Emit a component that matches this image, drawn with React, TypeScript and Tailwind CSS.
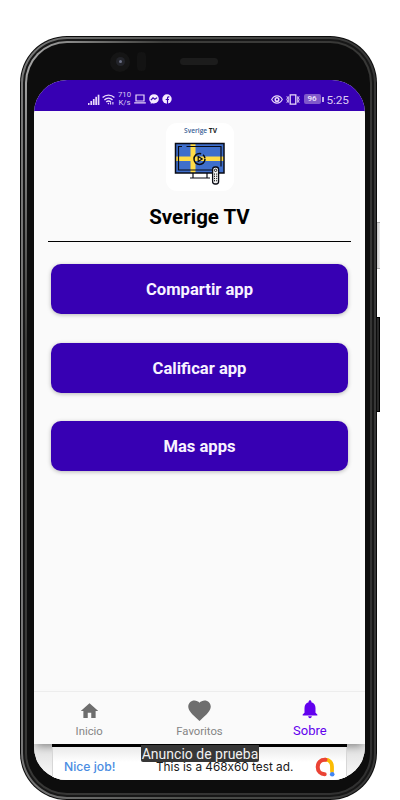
import React from "react";

function SignalIcon() {
  return (
    <svg width="12" height="11" viewBox="0 0 12 11" fill="#e9d9fa" className="shrink-0">
      <rect x="0" y="9" width="1.5" height="2" />
      <rect x="2.4" y="7" width="1.7" height="4" />
      <rect x="4.9" y="5" width="1.7" height="6" />
      <rect x="7.3" y="2.8" width="1.7" height="8.2" />
      <rect x="9.7" y="0.7" width="1.7" height="10.3" />
    </svg>
  );
}

function WifiIcon() {
  return (
    <svg width="13" height="11" viewBox="0 0 13 11" fill="none" stroke="#e9d9fa" strokeWidth="1.4" className="ml-[2px] shrink-0">
      <path d="M0.6 3.6C4 .3 9 .3 12.4 3.6M2.4 5.9c2.4-2.3 5.8-2.3 8.2 0M4.2 8c1.4-1.2 3.2-1.2 4.6 0" />
      <circle cx="6.4" cy="9.6" r=".8" fill="#e9d9fa" stroke="none" />
      <path d="M8.6 10.6V8.2M10.9 8v2.6" strokeWidth="1.1" />
    </svg>
  );
}

function LaptopIcon() {
  return (
    <svg width="12" height="10" viewBox="0 0 12 10" fill="none" stroke="#e9d9fa" className="ml-[3px] shrink-0">
      <path d="M2 1h8v6H2zM.2 8.8h11.6" strokeWidth="1.2" />
    </svg>
  );
}

function MessengerIcon() {
  return (
    <svg width="10" height="10" viewBox="0 0 10 10" className="ml-[2.5px] shrink-0">
      <path d="M5 .2C2.2.2.2 2.2.2 4.8c0 1.500.6 2.600 1.500 3.400v1.600l1.600-.6c3.400 1 6.500-1.100 6.500-4.400C9.800 2.200 7.800.2 5 .2z" fill="#f5ebff" />
      <path d="M1.900 6.100 4 3.800l1.900 1.500 2.200-1.700" fill="none" stroke="#3700b3" strokeWidth="1.200" />
    </svg>
  );
}

function FacebookIcon() {
  return (
    <svg width="10" height="10" viewBox="0 0 10 10" className="ml-[3.5px] shrink-0">
      <circle cx="5" cy="5" r="4.700" fill="#f5ebff" />
      <path d="M5.500 10V5M7.300 2.800H6.500c-.8 0-1 .4-1 1.100V5.500M3.700 5.500h3.300" fill="none" stroke="#3700b3" strokeWidth="1.200" />
    </svg>
  );
}

function EyeIcon() {
  return (
    <svg width="12" height="9" viewBox="0 0 12 9" fill="none" stroke="#e9d9fa" className="shrink-0">
      <path d="M.7 4.500C3.200-.3 8.800-.3 11.300 4.500 8.800 9.300 3.200 9.300.7 4.500z" strokeWidth="1.100" />
      <circle cx="6" cy="4.500" r="1.800" strokeWidth="1.500" />
    </svg>
  );
}

function VibrateIcon() {
  return (
    <svg width="14" height="11" viewBox="0 0 14 11" fill="none" stroke="#e9d9fa" className="ml-[2.5px] shrink-0">
      <path d="M4.200 .8h5.600v9.400H4.200z" strokeWidth="1.300" />
      <path d="M.8 2.300l.8 1.600-.8 1.600.8 1.600-.8 1.600M2.300 2.300v6.400M13.200 2.300l-.8 1.600.8 1.600-.8 1.600.8 1.600M11.700 2.300v6.400" strokeWidth=".9" />
    </svg>
  );
}

function StatusBar() {
  return (
    <header className="flex h-[31px] shrink-0 items-center bg-[#3700b3] pt-[7px] pr-[17px] pl-[54px] text-[#dccbf2]">
      <SignalIcon />
      <WifiIcon />
      <div className="ml-[3px] w-[13px] text-center text-[7.700px] leading-[8.500px]">
        <div>710</div>
        <div>K/s</div>
      </div>
      <LaptopIcon />
      <MessengerIcon />
      <FacebookIcon />
      <div className="grow" />
      <EyeIcon />
      <VibrateIcon />
      <div className="ml-[4px] flex h-[10px] w-[17px] items-center justify-center rounded-[2px] bg-[#8058ca] text-[8px] font-medium text-[#f3e8ff]">96</div>
      <div className="ml-px h-[5px] w-[2px] bg-[#c6b1e8]" />
      <div className="ml-[3px] w-[21.500px] pt-px text-[11.800px] leading-[14px] tracking-[-0.1px] whitespace-nowrap">5:25</div>
    </header>
  );
}

function AppLogo() {
  return (
    <div className="flex h-[68px] w-[68px] flex-col items-center rounded-[11px] bg-white">
      <div className="mt-[3px] h-[9px] pl-[2px] font-['Open_Sans',sans-serif] text-[6.600px] leading-[9px] font-semibold whitespace-nowrap text-[#222]">
        <span className="text-[#3b6196]">Sverige</span> <span className="font-bold">TV</span>
      </div>
      <svg width="52" height="43" viewBox="0 0 52 43" className="mt-[7px]">
        <path d="M2 2h48v29H2z" fill="#3f6fcc" />
        <path d="M16.500 2h5v29h-5zM2 14.500h48v4.500H2z" fill="#ffdc46" />
        <path d="M1.500 1.500h48.500v29.500H1.500z" fill="none" stroke="#090b14" strokeWidth="1.500" />
        <path d="M8 4.500H4.500v23.500H38M12.500 4.500H47v20M19 31v4.500M33 31v4.500M16 36h20" fill="none" stroke="#090b14" strokeWidth="1.200" />
        <circle cx="25.500" cy="17" r="5.500" fill="none" stroke="#090b14" strokeWidth="1.500" strokeDasharray="27 2 4 2" />
        <path d="m24.200 14.500 4 2.500-4 2.500z" fill="#ffdc46" stroke="#090b14" strokeWidth="1.200" />
        <rect x="38.600" y="25" width="6" height="17" rx="2.500" fill="#f3f3f3" stroke="#090b14" strokeWidth="1.300" />
        <circle cx="41.600" cy="28.300" r="1.200" fill="none" stroke="#111" strokeWidth=".9" />
        <path d="M40.500 31.500v8M42.700 31.500v8" stroke="#111" strokeWidth="1" strokeDasharray="1.200 1" />
      </svg>
    </div>
  );
}

function ActionButton({ children }: { children: React.ReactNode }) {
  return (
    <button className="mx-[17px] flex h-[50px] shrink-0 items-center justify-center rounded-[10px] bg-[#3700b3] pt-[3px] text-[16.600px] leading-none font-bold text-[#f8f3ff] shadow-[0_1px_4px_#00000044]">
      {children}
    </button>
  );
}

function HomeIcon() {
  return (
    <svg width="21" height="22" viewBox="0 0 24 24" fill="#6e6e6e">
      <path d="M10 20v-6h4v6h5v-8h3L12 3 2 12h3v8z" />
    </svg>
  );
}

function HeartIcon() {
  return (
    <svg width="27" height="27" viewBox="0 0 24 24" fill="#6e6e6e">
      <path d="m12 21.350-1.450-1.320C5.400 15.360 2 12.280 2 8.500 2 5.420 4.420 3 7.500 3c1.740 0 3.410.81 4.500 2.090C13.090 3.810 14.760 3 16.500 3 19.580 3 22 5.420 22 8.500c0 3.780-3.400 6.860-8.550 11.540z" />
    </svg>
  );
}

function BellIcon() {
  return (
    <svg width="22" height="22" viewBox="0 0 24 24" fill="#6200ee">
      <path d="M12 22c1.100 0 2-.9 2-2h-4c0 1.100.89 2 2 2zm6-6v-5c0-3.070-1.640-5.640-4.500-6.320V4c0-.83-.67-1.500-1.500-1.500s-1.500.67-1.500 1.500v.68C7.630 5.360 6 7.920 6 11v5l-2 2v1h16v-1z" />
    </svg>
  );
}

function BottomNav() {
  return (
    <nav className="relative z-10 grid h-[53px] shrink-0 grid-cols-3 border-t border-[#ededed] bg-[#fafafa] text-[11.300px] leading-[14px] text-[#858585] shadow-[0_5px_8px_-3px_#00000066]">
      <div className="flex flex-col items-center">
        <div className="mt-[8px] flex h-[22px] items-center"><HomeIcon /></div>
        <span className="mt-[3px]">Inicio</span>
      </div>
      <div className="flex flex-col items-center">
        <div className="mt-[7px] flex h-[22px] items-center"><HeartIcon /></div>
        <span className="mt-[4px]">Favoritos</span>
      </div>
      <div className="flex flex-col items-center text-[#6200ee]">
        <div className="mt-[6px] flex h-[22px] items-center"><BellIcon /></div>
        <span className="mt-[4px] text-[13px]">Sobre</span>
      </div>
    </nav>
  );
}

function AdBanner() {
  return (
    <aside className="relative flex h-[36px] shrink-0 bg-gradient-to-b from-[#dedede] to-[#fafafa] px-[18px]">
      <div className="relative z-20 flex w-full flex-col bg-gradient-to-b from-[#e6e6e6] via-white to-white">
        <div className="h-[3px] shrink-0 bg-black" />
        <div className="flex grow items-center border-x border-[#d7d7d7] pt-[6px] pl-[11px] font-['Inter',sans-serif] leading-[16px] text-[#191919]">
          <span className="w-[92px] text-[12.200px] font-medium whitespace-nowrap text-[#4b8de2]">Nice job!</span>
          <span className="w-[139px] text-[11.800px] whitespace-nowrap [font-feature-settings:'calt'_0]">This is a 468x60 test ad.</span>
          <svg width="20" height="20" viewBox="0 0 20 20" className="ml-[20px] shrink-0" fill="none" strokeLinecap="round">
            <path d="M10 2.700c4.300 0 7 2.600 7 7v4.500" stroke="#fbbc04" strokeWidth="3.800" />
            <path d="M10.500 2.700C5.700 2.400 2.700 5.600 2.700 10c0 4.200 3 7.200 7 7.200" stroke="#ea4335" strokeWidth="4" />
            <circle cx="17.200" cy="17.300" r="2.300" fill="#4285f4" />
          </svg>
        </div>
      </div>
      <div className="absolute top-px left-[107px] z-30 flex h-[17px] w-[118px] items-center justify-center rounded-b-[2px] bg-[#373737] text-[14px] leading-none whitespace-nowrap text-[#f1f1f1]">
        Anuncio de prueba
      </div>
    </aside>
  );
}

function Screen() {
  return (
    <div className="flex h-[700px] w-[331px] shrink-0 flex-col overflow-hidden rounded-[33px] bg-[#fafafa]">
      <StatusBar />
      <main className="flex grow flex-col">
        <div className="mt-[12px] flex justify-center"><AppLogo /></div>
        <h1 className="mt-[13.500px] text-center text-[20.500px] leading-[24px] font-bold text-black">Sverige TV</h1>
        <div className="mx-[14px] mt-[12.500px] h-px bg-black" />
        <div className="mt-[22px] flex flex-col gap-[28.500px]">
          <ActionButton>Compartir app</ActionButton>
          <ActionButton>Calificar app</ActionButton>
          <ActionButton>Mas apps</ActionButton>
        </div>
      </main>
      <BottomNav />
      <AdBanner />
    </div>
  );
}

export default function App() {
  return (
    <div className="relative h-[800px] w-[400px] overflow-hidden bg-white pt-[36px] pl-[20px] font-['Roboto','Liberation_Sans',sans-serif]">
      <div className="absolute top-[222px] left-[376px] h-[47px] w-[4px] border-y border-[#aaa] bg-gradient-to-r from-[#bbb] to-[#eee]" />
      <div className="absolute top-[317px] left-[376px] h-[95px] w-[4px] border-y border-r border-black bg-[#292929]" />
      <div className="relative h-[764px] w-[357px] rounded-[47px] bg-[#0b0b0b] p-px">
        <div className="h-full rounded-[46px] bg-gradient-to-r from-[#777] via-[#4c4e4b] to-[#363636] p-[2px]">
          <div className="h-full rounded-[44px] bg-[#171717] p-[2px]">
            <div className="h-full rounded-[42px] bg-gradient-to-br from-[#b0b0b0] via-[#3c3c3a] via-20% to-[#303030] p-[2px]">
              <div className="flex h-full flex-col rounded-[40px] bg-[#0d0d0d] pr-[5px] pl-[7px]">
                <div className="flex h-[37px] shrink-0 items-center">
                  <div className="ml-[76px] flex h-[20px] w-[20px] items-center justify-center rounded-full bg-[#151515]">
                    <div className="flex h-[9px] w-[9px] items-center justify-center rounded-full bg-[#23242a]">
                      <div className="h-[3px] w-[3px] rounded-full bg-[#6b7085]" />
                    </div>
                  </div>
                  <div className="ml-[7px] h-[19px] w-[9px] rounded-[4px] bg-[#131313]" />
                  <div className="ml-[34px] h-[7px] w-[38px] rounded-full bg-[#1c1c1c]" />
                </div>
                <Screen />
              </div>
            </div>
          </div>
        </div>
      </div>
    </div>
  );
}
